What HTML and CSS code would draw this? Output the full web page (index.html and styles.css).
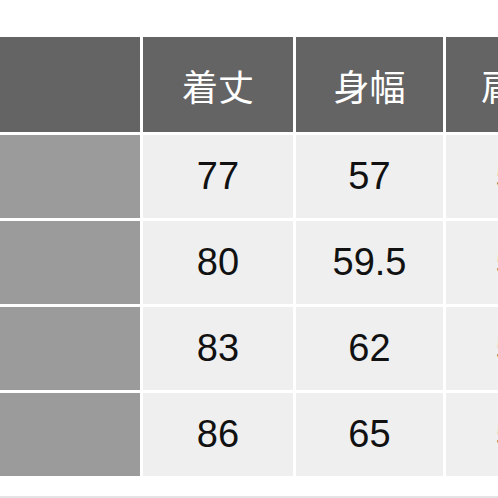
FILE: index.html
```html
<!DOCTYPE html>
<html lang="ja">
<head>
<meta charset="utf-8">
<title>サイズ表</title>
<link rel="stylesheet" href="styles.css">
</head>
<body>
<div class="wrap">
  <div class="size-table">
    <div class="cell head"></div>
    <div class="cell head">着丈</div>
    <div class="cell head">身幅</div>
    <div class="cell head">肩幅</div>

    <div class="cell label"></div>
    <div class="cell num">77</div>
    <div class="cell num">57</div>
    <div class="cell num">50</div>

    <div class="cell label"></div>
    <div class="cell num">80</div>
    <div class="cell num">59.5</div>
    <div class="cell num">52</div>

    <div class="cell label"></div>
    <div class="cell num">83</div>
    <div class="cell num">62</div>
    <div class="cell num">54</div>

    <div class="cell label"></div>
    <div class="cell num">86</div>
    <div class="cell num">65</div>
    <div class="cell num">56</div>
  </div>
  <div class="rule"></div>
</div>
</body>
</html>
```

FILE: styles.css
```css
html, body {
  margin: 0;
  padding: 0;
  background: #ffffff;
  overflow: hidden;
}

.wrap {
  width: 498px;
  height: 498px;
  overflow: hidden;
  padding-top: 37px;
  box-sizing: border-box;
}

.size-table {
  display: grid;
  grid-template-columns: 140px 150px 147px 142px;
  grid-template-rows: 95px 83px 83px 83px 83px;
  gap: 3px;
  width: 588px;
}

.cell {
  display: flex;
  align-items: center;
  justify-content: center;
}

.head {
  background: #646464;
  color: #ffffff;
  font-family: "Noto Sans CJK JP", "Noto Sans", sans-serif;
  font-size: 36px;
  font-weight: 400;
}

.label {
  background: #9b9b9b;
}

.num {
  background: #efefef;
  color: #111111;
  font-family: "Liberation Sans", Arial, sans-serif;
  font-size: 38px;
}

.rule {
  margin-top: 20px;
  height: 2px;
  background: #e4e4e4;
}
```
